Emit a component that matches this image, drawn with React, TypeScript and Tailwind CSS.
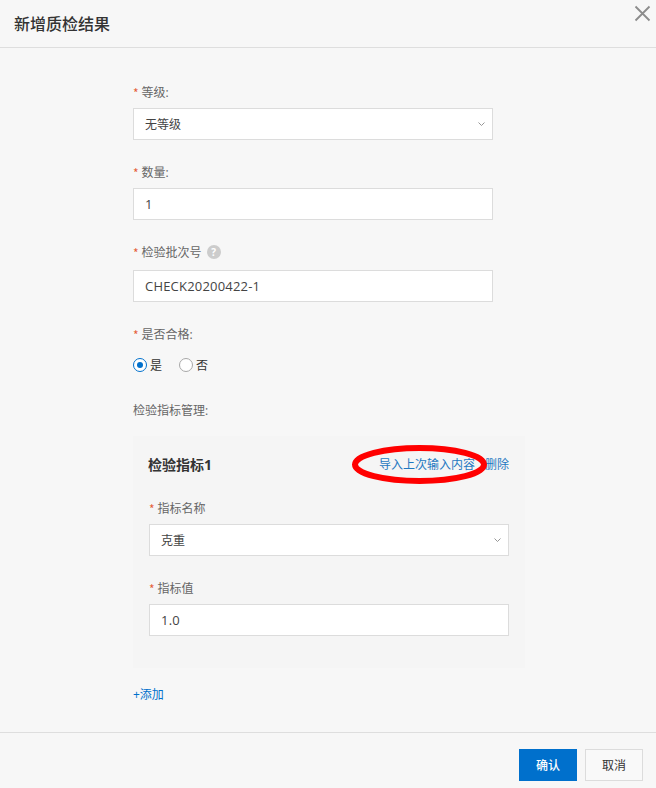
import React from "react";

function Label({ text, required = true, children }: { text: string; required?: boolean; children?: React.ReactNode }) {
  return (
    <div className="flex items-center h-4 text-xs leading-4 text-[#666666]">
      {required && <span className="text-[#e5603a] w-[8.5px] pt-px font-['Noto_Sans_CJK_SC',sans-serif]">*</span>}
      <span className="pt-px">{text}</span>
      {children}
    </div>
  );
}

function Chevron() {
  return (
    <svg width="7" height="4" viewBox="0 0 7 4" fill="none" className="absolute right-[7px] top-[13px]">
      <path d="M0.5 0.5L3.5 3.5L6.5 0.5" stroke="#8a8a8a" strokeWidth="0.9" />
    </svg>
  );
}

function Field({ value, select = false, latin = false }: { value: string; select?: boolean; latin?: boolean }) {
  return (
    <div
      className={
        latin
          ? "relative h-8 w-full bg-white border border-[#dcdcdc] pl-[11px] pt-px flex items-center text-[13px] tracking-[0.2px] text-[#444444]"
          : "relative h-8 w-full bg-white border border-[#dcdcdc] pl-[11px] pt-px flex items-center text-xs text-[#444444]"
      }
    >
      {value}
      {select && <Chevron />}
    </div>
  );
}

function Radio({ checked, label }: { checked: boolean; label: string }) {
  return (
    <div className="flex items-center">
      <span
        className={
          checked
            ? "w-[14px] h-[14px] rounded-full border border-[#0070cc] flex items-center justify-center bg-white"
            : "w-[14px] h-[14px] rounded-full border border-[#a8a8a8] bg-white"
        }
      >
        {checked && <span className="w-[6px] h-[6px] rounded-full bg-[#0070cc]" />}
      </span>
      <span className="ml-[3px] pt-px text-xs text-[#333333]">{label}</span>
    </div>
  );
}

export default function App() {
  return (
    <div className="relative w-[656px] h-[788px] bg-[#f7f7f7] overflow-hidden flex flex-col font-['Open_Sans','Noto_Sans_CJK_SC',sans-serif]">
      <header className="relative h-12 shrink-0 border-b border-[#dedede] flex items-center pl-[14px]">
        <h1 className="text-base font-medium text-[#333333] leading-none">新增质检结果</h1>
        <svg width="17" height="17" viewBox="0 0 17 17" fill="none" className="absolute right-[5px] top-[5px]">
          <path d="M1.5 1.5L15.5 15.5M15.5 1.5L1.5 15.5" stroke="#8c8c8c" strokeWidth="1.8" />
        </svg>
      </header>

      <main className="flex-1 pl-[133px] pr-[131px] pt-9 flex flex-col">
        <div className="w-[360px]">
          <Label text="等级:" />
          <div className="mt-2"><Field value="无等级" select /></div>
          <div className="mt-6"><Label text="数量:" /></div>
          <div className="mt-2"><Field value="1" latin /></div>
          <div className="mt-6">
            <Label text="检验批次号">
              <span className="ml-[5px] w-[14px] h-[14px] rounded-full bg-[#cccccc] text-white text-[10px] font-bold flex items-center justify-center">?</span>
            </Label>
          </div>
          <div className="mt-[10px]"><Field value="CHECK20200422-1" latin /></div>
          <div className="mt-6"><Label text="是否合格:" /></div>
          <div className="mt-[15px] flex gap-[17px] h-4 items-center">
            <Radio checked label="是" />
            <Radio checked={false} label="否" />
          </div>
          <div className="mt-[29px]"><Label text="检验指标管理:" required={false} /></div>
        </div>

        <section className="mt-[18px] w-[392px] h-[232px] bg-[#f5f5f5] px-4 pt-5">
          <div className="flex items-center justify-between h-4 pt-px">
            <span className="text-sm font-bold text-[#333333] -ml-px">检验指标1</span>
            <span className="text-xs text-[#1f78c1]">
              <span>导入上次输入内容</span>
              <span className="ml-[10px]">删除</span>
            </span>
          </div>
          <div className="mt-[28px]"><Label text="指标名称" /></div>
          <div className="mt-2"><Field value="克重" select /></div>
          <div className="mt-6"><Label text="指标值" /></div>
          <div className="mt-2"><Field value="1.0" latin /></div>
        </section>

        <div className="mt-[18px] h-4 pt-px flex items-center text-xs text-[#0070cc]">+添加</div>
      </main>

      <footer className="h-14 shrink-0 border-t border-[#dedede] flex justify-end gap-2 pt-4 pr-[13px]">
        <button className="w-[58px] h-8 pt-px bg-[#0070cc] text-white text-xs font-medium">确认</button>
        <button className="w-[58px] h-8 pt-px bg-[#f9f9f9] border border-[#dcdcdc] text-[#333333] text-xs">取消</button>
      </footer>

      <svg width="140" height="44" viewBox="0 0 140 44" fill="none" className="absolute left-[350px] top-[444px]">
        <ellipse cx="69.5" cy="20.5" rx="64.5" ry="16.5" stroke="#ff0000" strokeWidth="6" />
      </svg>
    </div>
  );
}
